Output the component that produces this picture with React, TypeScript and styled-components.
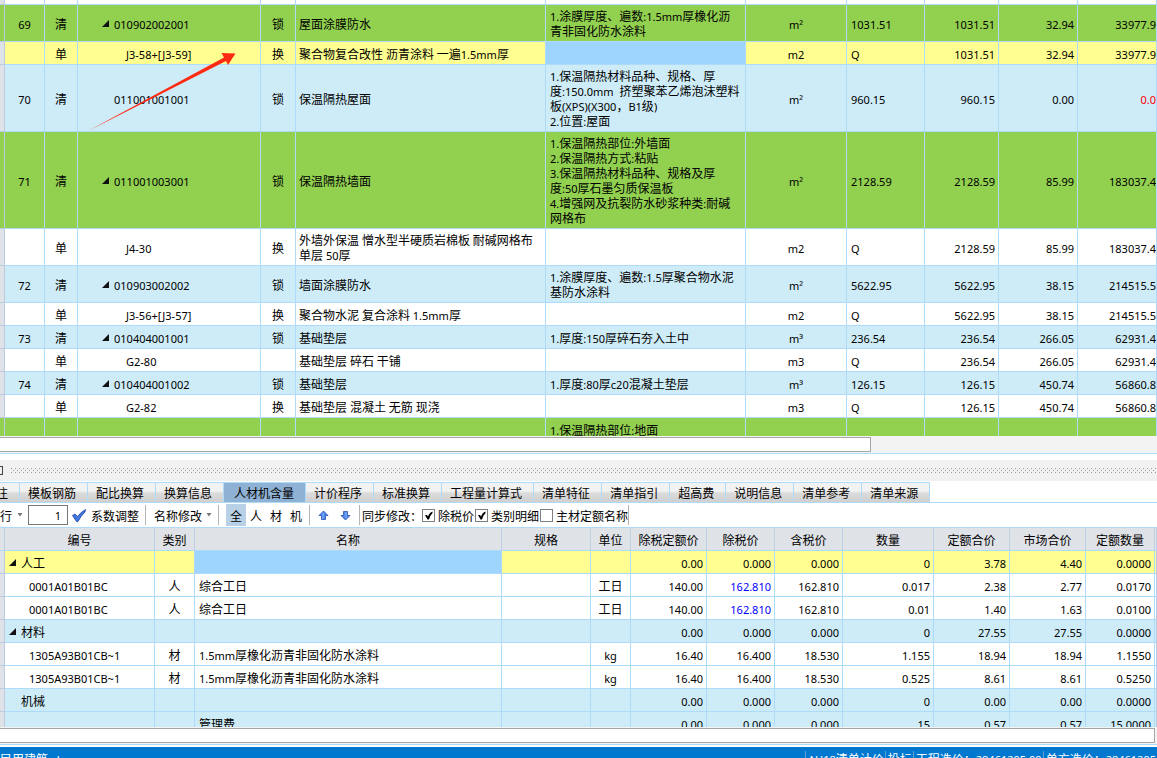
import React, { Fragment, useState } from "react";
import styled, { createGlobalStyle, css } from "styled-components";

const LATIN = '"Noto Sans", "Noto Sans CJK SC", sans-serif';
const line = "#afdbfa";

const Global = createGlobalStyle`
  * { box-sizing: border-box; }
  body { margin: 0; overflow: hidden; background: #fff; color: #000; }
  body, button, input {
    font-family: "Noto Sans CJK SC", "Noto Sans", sans-serif;
    font-size: 12px;
    line-height: 15px;
  }
`;

const Shell = styled.main`
  display: flex;
  flex-direction: column;
  height: 100vh;
  overflow: hidden;
  position: relative;
`;

const Latin = styled.span`
  font-family: ${LATIN};
  font-size: 11px;
  line-height: 10px;
`;

/* Latin runs are set one size smaller than the Chinese around them. */
const Txt = ({ children }: { children: string }) => (
  <>
    {children.split(/([\x20-\x7e²³]+)/).map((run, i) =>
      i % 2 ? <Latin key={i}>{run}</Latin> : <Fragment key={i}>{run}</Fragment>
    )}
  </>
);

/* ---------- grids ---------- */

type Tone = "green" | "yellow" | "blue" | "white";
const tones: Record<Tone, string> = {
  green: "#92d050",
  yellow: "#ffff91",
  blue: "#ceecf8",
  white: "#ffffff",
};

const GridPane = styled.section<{ $grow: number }>`
  flex: ${(p) => p.$grow} 1 0;
  min-height: 0;
  overflow: hidden;
`;

const Grid = styled.table`
  width: 100%;
  table-layout: fixed;
  border-collapse: separate;
  border-spacing: 0;
`;

const Row = styled.tr<{ $tone: Tone }>`
  background: ${(p) => tones[p.$tone]};
`;

type CellProps = { $align?: "left" | "center" | "right"; $selected?: boolean; $color?: string; $flush?: boolean };
const Cell = styled.td<CellProps>`
  height: 23px;
  padding: 3px ${(p) => (p.$flush ? 0 : 3)}px 3px 3px;
  border-right: 1px solid ${line};
  border-bottom: 1px solid ${line};
  vertical-align: middle;
  white-space: pre;
  overflow: hidden;
  text-align: ${(p) => p.$align ?? "left"};
  color: ${(p) => p.$color ?? "inherit"};
  ${(p) => p.$selected && css`background: #9ed5ff;`}
`;

const SpecCell = styled(Cell)`
  padding-left: 4px;
`;

const Gutter = styled.td<{ $plain?: boolean; $height?: number }>`
  height: ${(p) => p.$height ?? 23}px;
  padding: 0;
  border-right: 1px solid #bccbe0;
  border-bottom: 1px solid #bccbe0;
  ${(p) => !p.$plain && css`background: #dfe2e7;`}
`;

const Head = styled.th`
  height: 23px;
  padding: 0;
  background: #dfe2e7;
  border-right: 1px solid #bccfe3;
  border-bottom: 1px solid ${line};
  font-weight: 400;
  white-space: nowrap;
`;

const TreeCell = styled.div<{ $indent: number }>`
  display: flex;
  align-items: center;
  gap: 5px;
  padding-left: ${(p) => p.$indent}px;
`;

const Fold = () => (
  <svg width="7" height="7" viewBox="0 0 7 7" aria-hidden="true">
    <path d="M7 0V7H0Z" fill="#111" />
  </svg>
);

type Item = {
  tone: Tone; no?: string; kind: string; code: string; fold?: boolean;
  lock: string; name: string; spec?: string; unit: string; expr: string; qty: string;
  price: string; total: string; selected?: boolean; red?: boolean;
};

const items: Item[] = [
  { tone: "green", no: "69", kind: "清", code: "010902002001", fold: true, lock: "锁", name: "屋面涂膜防水", spec: "1.涂膜厚度、遍数:1.5mm厚橡化沥\n青非固化防水涂料", unit: "m²", expr: "1031.51", qty: "1031.51", price: "32.94", total: "33977.9" },
  { tone: "yellow", kind: "单", code: "J3-58+[J3-59]", lock: "换", name: "聚合物复合改性 沥青涂料 一遍1.5mm厚", unit: "m2", expr: "Q", qty: "1031.51", price: "32.94", total: "33977.9", selected: true },
  { tone: "blue", no: "70", kind: "清", code: "011001001001", lock: "锁", name: "保温隔热屋面", spec: "1.保温隔热材料品种、规格、厚\n度:150.0mm  挤塑聚苯乙烯泡沫塑料\n板(XPS)(X300，B1级)\n2.位置:屋面", unit: "m²", expr: "960.15", qty: "960.15", price: "0.00", total: "0.0", red: true },
  { tone: "green", no: "71", kind: "清", code: "011001003001", fold: true, lock: "锁", name: "保温隔热墙面", spec: "1.保温隔热部位:外墙面\n2.保温隔热方式:粘贴\n3.保温隔热材料品种、规格及厚\n度:50厚石墨匀质保温板\n4.增强网及抗裂防水砂浆种类:耐碱\n网格布", unit: "m²", expr: "2128.59", qty: "2128.59", price: "85.99", total: "183037.4" },
  { tone: "white", kind: "单", code: "J4-30", lock: "换", name: "外墙外保温 憎水型半硬质岩棉板 耐碱网格布\n单层 50厚", unit: "m2", expr: "Q", qty: "2128.59", price: "85.99", total: "183037.4" },
  { tone: "blue", no: "72", kind: "清", code: "010903002002", fold: true, lock: "锁", name: "墙面涂膜防水", spec: "1.涂膜厚度、遍数:1.5厚聚合物水泥\n基防水涂料", unit: "m²", expr: "5622.95", qty: "5622.95", price: "38.15", total: "214515.5" },
  { tone: "white", kind: "单", code: "J3-56+[J3-57]", lock: "换", name: "聚合物水泥 复合涂料 1.5mm厚", unit: "m2", expr: "Q", qty: "5622.95", price: "38.15", total: "214515.5" },
  { tone: "blue", no: "73", kind: "清", code: "010404001001", fold: true, lock: "锁", name: "基础垫层", spec: "1.厚度:150厚碎石夯入土中", unit: "m³", expr: "236.54", qty: "236.54", price: "266.05", total: "62931.4" },
  { tone: "white", kind: "单", code: "G2-80", lock: "", name: "基础垫层 碎石 干铺", unit: "m3", expr: "Q", qty: "236.54", price: "266.05", total: "62931.4" },
  { tone: "blue", no: "74", kind: "清", code: "010404001002", fold: true, lock: "锁", name: "基础垫层", spec: "1.厚度:80厚c20混凝土垫层", unit: "m³", expr: "126.15", qty: "126.15", price: "450.74", total: "56860.8" },
  { tone: "white", kind: "单", code: "G2-82", lock: "换", name: "基础垫层 混凝土 无筋 现浇", unit: "m3", expr: "Q", qty: "126.15", price: "450.74", total: "56860.8" },
];

const StubCell = styled.td`
  height: 5px;
  padding: 0;
  border-right: 1px solid ${line};
  border-bottom: 1px solid ${line};
`;

const itemCols = [5, 40, 33, 183, 35, 250, 200, 101, 78, 74, 79];

const ItemGrid = () => (
  <GridPane $grow={436}>
    <Grid aria-label="清单">
      <colgroup>
        {itemCols.map((w, i) => <col key={i} width={w} />)}
        <col />
      </colgroup>
      <tbody>
        <Row $tone="white">
          <Gutter $height={5} />
          {itemCols.map((_, i) => <StubCell key={i} />)}
        </Row>
        {items.map((r) => (
          <Row key={r.code} $tone={r.tone}>
            <Gutter $plain={r.tone === "green"} />
            <Cell $align="center"><Txt>{r.no ?? ""}</Txt></Cell>
            <Cell $align="center">{r.kind}</Cell>
            <Cell>
              <TreeCell $indent={r.fold ? 21 : r.kind === "清" ? 33 : 45}>
                {r.fold && <Fold />}
                <span><Txt>{r.code}</Txt></span>
              </TreeCell>
            </Cell>
            <Cell $align="center">{r.lock}</Cell>
            <Cell><Txt>{r.name}</Txt></Cell>
            <SpecCell $selected={r.selected}><Txt>{r.spec ?? ""}</Txt></SpecCell>
            <Cell $align="center"><Txt>{r.unit}</Txt></Cell>
            <SpecCell><Txt>{r.expr}</Txt></SpecCell>
            <Cell $align="right"><Txt>{r.qty}</Txt></Cell>
            <Cell $align="right"><Txt>{r.price}</Txt></Cell>
            <Cell $align="right" $flush $color={r.red ? "#ff0000" : undefined}><Txt>{r.total}</Txt></Cell>
          </Row>
        ))}
        <Row $tone="green">
          <Gutter $plain />
          {itemCols.map((_, i) =>
            i === 5 ? <SpecCell key={i}><Txt>1.保温隔热部位:地面</Txt></SpecCell> : <Cell key={i} />
          )}
        </Row>
      </tbody>
    </Grid>
  </GridPane>
);

/* ---------- scroll bars and splitter ---------- */

const ScrollTrack = styled.div`
  flex: none;
  height: 18px;
  padding: 1px 0;
  background: #f3f3f3;
  border-bottom: 1px solid ${line};
`;

const ScrollThumb = styled.div<{ $gap: string }>`
  height: 15px;
  margin-right: ${(p) => p.$gap};
  background: #fff;
  border: 1px solid #a6a6a6;
  border-left: 0;
`;

const Splitter = styled.div`
  flex: none;
  display: flex;
  align-items: center;
  gap: 8px;
  height: 21px;
  margin-top: 6px;
  background: #f1f1f1;
`;

const PinMark = styled.span`
  flex: none;
  width: 3px;
  height: 9px;
  border: 1px solid #444;
  border-left: 0;
`;

const Grip = () => (
  <svg width="100%" height="5" aria-hidden="true">
    <defs>
      <pattern id="grip" width="4" height="4" patternUnits="userSpaceOnUse">
        <rect width="1" height="1" fill="#999" />
        <rect x="2" y="2" width="1" height="1" fill="#999" />
      </pattern>
    </defs>
    <rect width="100%" height="5" fill="url(#grip)" />
  </svg>
);

/* ---------- tabs ---------- */

const TabBar = styled.div`
  flex: none;
  display: flex;
  height: 22px;
  padding-top: 1px;
  border-bottom: 1px solid ${line};
`;

const Tab = styled.button<{ $active?: boolean; $cut?: boolean }>`
  height: 20px;
  padding: 0 11px 0 8px;
  border: solid ${line};
  border-width: 1px 1px 0 0;
  background: linear-gradient(#f2f2f2 0 8px, #dcdcdc 10px, #cfcfcf);
  white-space: nowrap;
  ${(p) => p.$active && css`background: #8fb1d3; padding: 0 11px 0 10px;`}
  ${(p) => p.$cut && css`
    display: flex;
    align-items: center;
    justify-content: flex-end;
    width: 20px;
    padding: 0 11px 0 0;
    overflow: hidden;
  `}
`;

const tabs = ["注", "模板钢筋", "配比换算", "换算信息", "人材机含量", "计价程序", "标准换算", "工程量计算式", "清单特征", "清单指引", "超高费", "说明信息", "清单参考", "清单来源"];

/* ---------- toolbar ---------- */

const Toolbar = styled.div`
  flex: none;
  display: flex;
  align-items: center;
  height: 25px;
  border-bottom: 1px solid ${line};
  white-space: nowrap;
`;

const ToolButton = styled.button<{ $cut?: boolean }>`
  display: flex;
  align-items: center;
  gap: ${(p) => (p.$cut ? 5 : 4)}px;
  padding: 0 ${(p) => (p.$cut ? 5 : 6)}px 0 ${(p) => (p.$cut ? 0 : 8)}px;
  border: 0;
  background: none;
`;

const ApplyButton = styled(ToolButton)`
  gap: 5px;
  padding: 0 6px 0 4px;
`;

const Factor = styled.input`
  width: 40px;
  height: 20px;
  padding: 0 6px;
  border: 1px solid #777;
  font-family: ${LATIN};
  font-size: 11px;
  text-align: right;
`;

const Divider = styled.span`
  width: 1px;
  height: 20px;
  background: #b4b4b4;
`;

const Filters = styled.div`
  display: flex;
  padding: 0 3px 0 7px;
`;

const Filter = styled.button<{ $active?: boolean }>`
  width: 20px;
  height: 22px;
  padding: 0;
  border: 0;
  background: ${(p) => (p.$active ? "#b9d1e6" : "none")};
`;

const Movers = styled.div`
  display: flex;
  gap: 11px;
  padding: 0 8px;
`;

const IconButton = styled.button`
  display: flex;
  padding: 0;
  border: 0;
  background: none;
`;

const SyncLabel = styled.span`
  padding-left: 2px;
`;

const Check = styled.label`
  display: grid;
  grid-template-columns: 13px auto;
  column-gap: 3px;
  align-items: center;
  & > input, & > svg { grid-area: 1 / 1; }
  & > svg { pointer-events: none; }
  & + & { margin-left: 1px; }
`;

const Box = styled.input`
  appearance: none;
  width: 13px;
  height: 13px;
  margin: 0;
  border: 1px solid #808080;
  background: #fff;
`;

const CheckBox = ({ text, on }: { text: string; on: boolean }) => {
  const [checked, setChecked] = useState(on);
  return (
    <Check>
      <Box type="checkbox" checked={checked} onChange={() => setChecked(!checked)} />
      {checked && (
        <svg width="13" height="13" viewBox="0 0 13 13" aria-hidden="true">
          <path d="M3 6L5 6L6 7.5Q7.5 3.5 10.5 2.5L10.5 4Q8 6.5 7 10.5H5.5Z" fill="#000" />
        </svg>
      )}
      {text}
    </Check>
  );
};

const Caret = () => (
  <svg width="6" height="4" viewBox="0 0 6 4" aria-hidden="true">
    <path d="M0.5 0H5.5L3 3.5Z" fill="#777" />
  </svg>
);

const ApplyIcon = () => (
  <svg width="14" height="13" viewBox="0 0 14 13" aria-hidden="true">
    <path d="M0.5 6.5L3 5L5.5 7.5Q9 3 13.5 0.5L13 3Q9 6.5 6 12.5H4.5Z" fill="#3f78e0" stroke="#1d3f9c" strokeWidth="0.8" />
  </svg>
);

const MoveIcon = ({ down }: { down?: boolean }) => (
  <svg width="11" height="11" viewBox="0 0 11 11" aria-hidden="true">
    <g transform={down ? "rotate(180 5.5 5.5)" : undefined}>
      <path d="M5.5 1L10 5.5H7.5V9.5H3.5V5.5H1Z" fill="#4f86ea" stroke="#2550b4" strokeWidth="0.8" />
      <path d="M5 3V9" stroke="#8db8ff" />
    </g>
  </svg>
);

/* ---------- resources ---------- */

const resCols: (number | undefined)[] = [5, 150, 40, undefined, 89, 40, 76, 68, 68, 91, 76, 76, 69, 2];
const resHeads = ["编号", "类别", "名称", "规格", "单位", "除税定额价", "除税价", "含税价", "数量", "定额合价", "市场合价", "定额数量"];

type Res = { tone: Tone; code: string; level: "group" | "flat" | "item"; kind?: string; name?: string; unit?: string; nums: string[]; blue?: boolean; selected?: boolean };
const resources: Res[] = [
  { tone: "yellow", code: "人工", level: "group", nums: ["0.00", "0.000", "0.000", "0", "3.78", "4.40", "0.0000"], selected: true },
  { tone: "white", code: "0001A01B01BC", level: "item", kind: "人", name: "综合工日", unit: "工日", nums: ["140.00", "162.810", "162.810", "0.017", "2.38", "2.77", "0.0170"], blue: true },
  { tone: "white", code: "0001A01B01BC", level: "item", kind: "人", name: "综合工日", unit: "工日", nums: ["140.00", "162.810", "162.810", "0.01", "1.40", "1.63", "0.0100"], blue: true },
  { tone: "blue", code: "材料", level: "group", nums: ["0.00", "0.000", "0.000", "0", "27.55", "27.55", "0.0000"] },
  { tone: "white", code: "1305A93B01CB~1", level: "item", kind: "材", name: "1.5mm厚橡化沥青非固化防水涂料", unit: "kg", nums: ["16.40", "16.400", "18.530", "1.155", "18.94", "18.94", "1.1550"] },
  { tone: "white", code: "1305A93B01CB~1", level: "item", kind: "材", name: "1.5mm厚橡化沥青非固化防水涂料", unit: "kg", nums: ["16.40", "16.400", "18.530", "0.525", "8.61", "8.61", "0.5250"] },
  { tone: "blue", code: "机械", level: "flat", nums: ["0.00", "0.000", "0.000", "0", "0.00", "0.00", "0.0000"] },
  { tone: "blue", code: "", level: "flat", name: "管理费", nums: ["0.00", "0.000", "0.000", "15", "0.57", "0.57", "15.0000"] },
];
const indents = { group: 1, flat: 13, item: 21 };

const ResourceGrid = () => (
  <GridPane $grow={199}>
    <Grid aria-label="人材机含量">
      <colgroup>
        {resCols.map((w, i) => <col key={i} width={w} />)}
      </colgroup>
      <thead>
        <tr>
          <Head />
          {resHeads.map((h) => <Head key={h} scope="col">{h}</Head>)}
          <Head />
        </tr>
      </thead>
      <tbody>
        {resources.map((r, n) => (
          <Row key={n} $tone={r.tone}>
            <Gutter />
            <Cell>
              <TreeCell $indent={indents[r.level]}>
                {r.level === "group" && <Fold />}
                <span><Txt>{r.code}</Txt></span>
              </TreeCell>
            </Cell>
            <Cell $align="center">{r.kind}</Cell>
            <SpecCell $selected={r.selected}><Txt>{r.name ?? ""}</Txt></SpecCell>
            <Cell />
            <Cell $align="center"><Txt>{r.unit ?? ""}</Txt></Cell>
            {r.nums.map((v, i) => (
              <Cell key={i} $align="right" $color={r.blue && i === 1 ? "#0000ff" : undefined}><Txt>{v}</Txt></Cell>
            ))}
            <Gutter $plain />
          </Row>
        ))}
      </tbody>
    </Grid>
  </GridPane>
);

/* ---------- status bar ---------- */

const StatusBar = styled.footer`
  flex: none;
  display: flex;
  height: 11px;
  margin-top: 2px;
  padding-top: 4px;
  overflow: hidden;
  background: #0078d0;
  color: #fff;
  white-space: nowrap;
`;

const Project = styled.span`
  margin-right: auto;
`;

const Status = styled.span`
  padding: 0 1px 0 2px;
  border-left: 1px solid #5d9fd0;
`;

/* ---------- annotation ---------- */

const Pointer = styled.svg`
  position: absolute;
  top: 50px;
  left: 88px;
  pointer-events: none;
`;

export default function App() {
  const [tab, setTab] = useState("人材机含量");
  const [filter, setFilter] = useState("全");
  return (
    <Shell>
      <Global />
      <ItemGrid />
      <ScrollTrack><ScrollThumb $gap="286px" /></ScrollTrack>
      <Splitter><PinMark /><Grip /></Splitter>
      <TabBar>
        {tabs.map((t, i) => (
          <Tab key={t} $cut={i === 0} $active={t === tab} onClick={() => setTab(t)}>{t}</Tab>
        ))}
      </TabBar>
      <Toolbar>
        <ToolButton $cut>行<Caret /></ToolButton>
        <Factor aria-label="系数" defaultValue="1" />
        <ApplyButton><ApplyIcon />系数调整</ApplyButton>
        <Divider />
        <ToolButton>名称修改<Caret /></ToolButton>
        <Divider />
        <Filters>
          {["全", "人", "材", "机"].map((f) => (
            <Filter key={f} $active={f === filter} onClick={() => setFilter(f)}>{f}</Filter>
          ))}
        </Filters>
        <Divider />
        <Movers>
          <IconButton aria-label="上移"><MoveIcon /></IconButton>
          <IconButton aria-label="下移"><MoveIcon down /></IconButton>
        </Movers>
        <Divider />
        <SyncLabel>同步修改：</SyncLabel>
        <CheckBox text="除税价" on />
        <CheckBox text="类别明细" on />
        <CheckBox text="主材定额名称" on={false} />
        <Divider />
      </Toolbar>
      <ResourceGrid />
      <ScrollTrack><ScrollThumb $gap="2px" /></ScrollTrack>
      <StatusBar>
        <Project><Txt>民用建筑   .  l</Txt></Project>
        <Status><Txt>AH18清单计价</Txt></Status>
        <Status>投标</Status>
        <Status><Txt>工程造价：28461295.09</Txt></Status>
        <Status><Txt>单方造价：28461295</Txt></Status>
      </StatusBar>
      <Pointer width="150" height="84" viewBox="88 50 150 84" aria-hidden="true">
        <path d="M88 131L224 57.5L221.5 53L235.5 53.5L228 65L226 61Z" fill="#ff2a12" />
      </Pointer>
    </Shell>
  );
}
